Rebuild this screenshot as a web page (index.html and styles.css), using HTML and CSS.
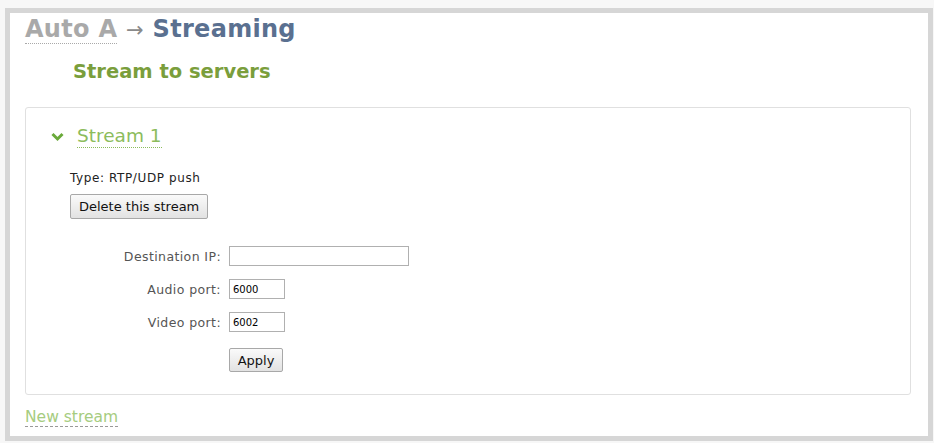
FILE: index.html
```html
<!DOCTYPE html>
<html lang="en">
<head>
    <meta charset="UTF-8">
    <title>Streaming</title>
    <link rel="stylesheet" href="styles.css">
</head>
<body>
    <div class="frame">
        <h1 class="crumbs">
            <a class="crumb-link">Auto A</a>
            <span class="arrow">&rarr;</span>
            <span class="crumb-current">Streaming</span>
        </h1>
        <h2 class="section-title">Stream to servers</h2>

        <div class="stream-box">
            <div class="stream-head">
                <svg class="chevron" width="13" height="10" viewBox="0 0 13 10">
                    <path d="M1.5 2 L6.5 7 L11.5 2" fill="none" stroke="#6aaa3a" stroke-width="3"/>
                </svg>
                <a class="stream-name">Stream 1</a>
            </div>
            <div class="stream-body">
                <div class="stream-type">Type: RTP/UDP push</div>
                <button class="btn">Delete this stream</button>

                <form class="stream-form">
                    <label for="destIp">Destination IP:</label>
                    <input type="text" id="destIp" class="field-wide">

                    <label for="audioPort">Audio port:</label>
                    <input type="text" id="audioPort" class="field-port" value="6000">

                    <label for="videoPort">Video port:</label>
                    <input type="text" id="videoPort" class="field-port" value="6002">

                    <span></span>
                    <button type="button" class="btn btn-apply">Apply</button>
                </form>
            </div>
        </div>

        <a class="new-stream">New stream</a>
    </div>
</body>
</html>
```

FILE: styles.css
```css
body {
    margin: 0;
    background-color: #f7f7f7;
    font-family: "DejaVu Sans", Verdana, sans-serif;
}
.frame {
    margin: 8px 1px 2px 5px;
    height: 423px;
    border: 5px solid #d6d6d6;
    background: white;
    padding: 0 15px;
}
.crumbs {
    margin: 0;
    padding-top: 2px;
    font-size: 24px;
    font-weight: bold;
    letter-spacing: 0.3px;
}
.crumb-link {
    color: #a9a9a9;
    border-bottom: 1px dotted #a9a9a9;
}
.arrow {
    color: #8a8a8a;
    font-weight: normal;
    font-size: 21px;
}
.crumb-current {
    color: #5a7090;
}
.section-title {
    margin: 17px 0 0 48px;
    font-size: 19.5px;
    color: #7a9e3c;
}
.stream-box {
    margin-top: 24px;
    border: 1px solid #e0e0e0;
    border-radius: 3px;
    height: 286px;
    width: 884px;
}
.stream-head {
    display: flex;
    align-items: center;
    gap: 13px;
    padding: 17px 0 0 25px;
}
.stream-name {
    color: #8cbc5c;
    font-size: 18.5px;
    border-bottom: 1px dotted #8cbc5c;
    line-height: 22px;
}
.stream-body {
    padding-left: 44px;
}
.stream-type {
    margin-top: 23px;
    font-size: 12px;
    letter-spacing: 0.6px;
    color: #222;
}
.btn {
    font-family: "DejaVu Sans", Verdana, sans-serif;
    font-size: 13px;
    color: #111;
    background: linear-gradient(#fafafa, #e2e2e2);
    border: 1px solid #a8a8a8;
    border-radius: 2px;
    padding: 4px 8px;
    margin-top: 9px;
}
.stream-form {
    display: grid;
    grid-template-columns: 151px auto;
    column-gap: 8px;
    row-gap: 13px;
    justify-items: start;
    align-items: center;
    margin-top: 27px;
}
.stream-form label {
    justify-self: end;
    font-size: 12.5px;
    letter-spacing: 0.4px;
    color: #555;
}
.stream-form input {
    font-family: "DejaVu Sans", Verdana, sans-serif;
    font-size: 10px;
    height: 20px;
    box-sizing: border-box;
    border: 1px solid #b0b0b0;
    padding: 1px 3px;
}
.field-wide {
    width: 180px;
}
.field-port {
    width: 56px;
}
.btn-apply {
    margin-top: 3px;
    height: 24px;
    width: 54px;
    padding: 0;
}
.new-stream {
    display: inline-block;
    margin-top: 13px;
    color: #a6cc80;
    font-size: 15.5px;
    border-bottom: 1px dashed #999;
}
```
